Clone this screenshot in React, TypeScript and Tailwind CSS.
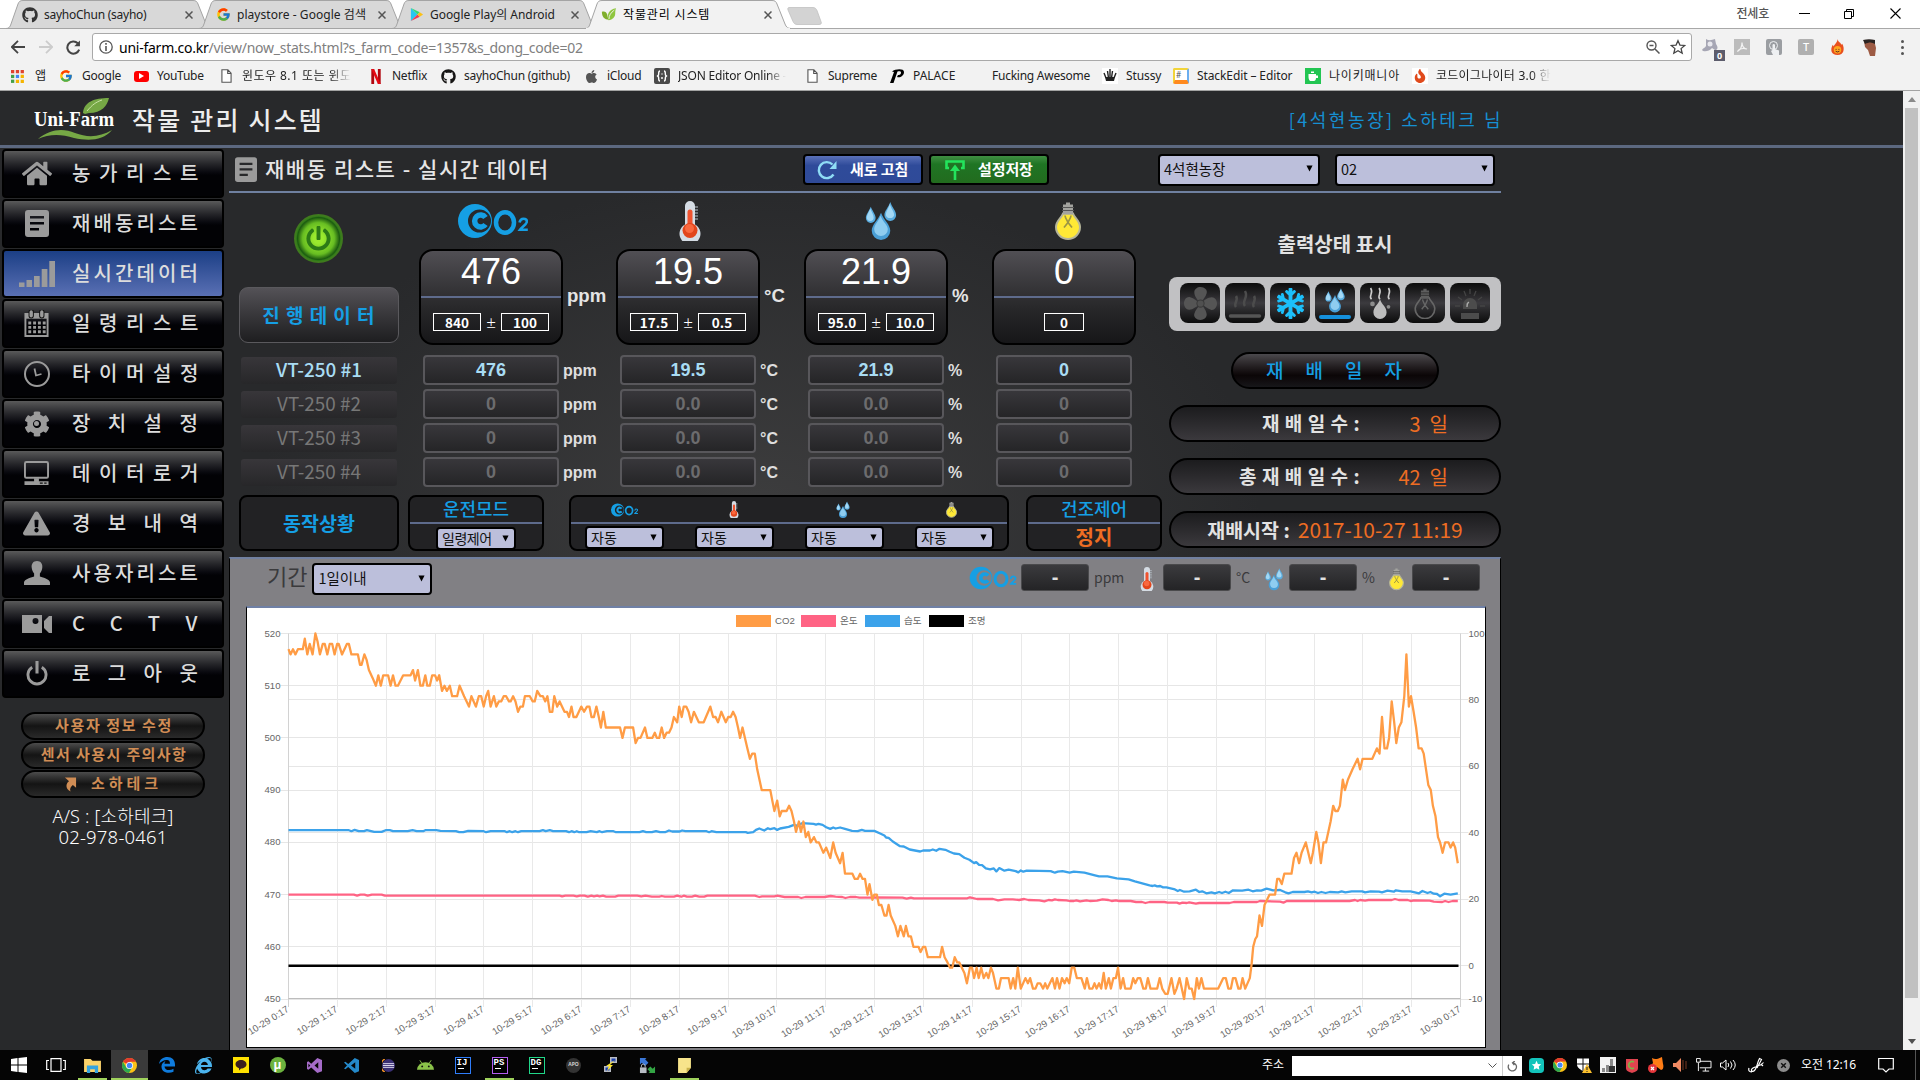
import type { ReactNode } from "react";
import { FaGithub, FaApple, FaInternetExplorer, FaHome, FaPowerOff, FaCog, FaExclamationTriangle, FaSnowflake, FaFire } from "react-icons/fa";
import { FcGoogle } from "react-icons/fc";

/* ---------- shared drawings ---------- */

function Co2({ className }: { className: string }) {
  return (
    <svg viewBox="0 0 70 36" className={className}>
      <path fillRule="evenodd" d="M17 1a17 17 0 1 0 0 34 17 17 0 1 0 0-34ZM21.500 6.500a11.500 11.500 0 1 1 0 23 11.500 11.500 0 1 1 0-23Z" fill="#159fe4" />
      <path d="M27.500 14.500a6 6 0 1 0 0 7" fill="none" stroke="#159fe4" strokeWidth="5.500" />
      <path d="M30 16h6v4h-6Z" fill="none" />
      <ellipse cx="47" cy="19.500" rx="9" ry="10.300" fill="none" stroke="#159fe4" strokeWidth="4.500" />
      <path d="M61.500 19.500c.6-2.800 2-3.800 4-3.800 2.200 0 3.600 1.200 3.300 3.300-.3 2.600-4.800 5-6.800 7.800h7.800" fill="none" stroke="#159fe4" strokeWidth="2.600" />
    </svg>
  );
}

function Thermo({ className }: { className: string }) {
  return (
    <svg viewBox="0 0 22 40" className={className}>
      <path d="M6 5a5 5 0 0 1 10 0v18.500a10.500 10.500 0 1 1-10 0Z" fill="#d5dce4" />
      <path d="M16 6h3M16 9h3M16 12h3M16 15h3M16 18h3" stroke="#b9c3cd" strokeWidth="1.200" />
      <path d="M8.500 11a2.500 2.500 0 0 1 5 0v13h-5Z" fill="#f0532f" />
      <circle cx="11" cy="29.500" r="7.500" fill="#e2451b" />
      <circle cx="10.500" cy="27.500" r="4.500" fill="#f9683f" />
    </svg>
  );
}

function Drops({ className }: { className: string }) {
  return (
    <svg viewBox="0 0 32 40" className={className}>
      <path d="M5.500 6c2 5 5 8 5 11.500a5 5 0 0 1-10 0C.5 14 3.500 11 5.500 6Z" fill="#5aade0" />
      <path d="M5 8c1.500 4 3.500 6 3.500 9a3.500 3.500 0 0 1-7 0C1.500 14 3.500 12 5 8Z" fill="#a3d8f5" />
      <path d="M25.500 1c2 6 6 9 6 13.500a6 6 0 0 1-12 0C19.500 10 23.500 7 25.500 1Z" fill="#5aade0" />
      <path d="M25 3c1.500 5 4.500 7.500 4.500 11.500a4.500 4.500 0 0 1-8.500 0C21 10.500 23.500 8 25 3Z" fill="#a3d8f5" />
      <path d="M16 12c3 8 9.500 12 9.500 18.500a9.500 9.500 0 0 1-19 0C6.500 24 13 20 16 12Z" fill="#4a9fd6" />
      <path d="M15.500 15c2.500 7 7.500 9 7.500 14a7 7 0 0 1-14 0C9 24 13 22 15.500 15Z" fill="#8fcdf0" />
    </svg>
  );
}

function Bulb({ className, off }: { className: string; off?: boolean }) {
  return (
    <svg viewBox="0 0 26 38" className={className}>
      <path d="M8 12h10c1 4 7 7 7 13.500A12 12 0 0 1 1 25.500C1 19 7 16 8 12Z" fill={off ? "none" : "#ffe936"} stroke={off ? "#666" : "#b4b49a"} strokeWidth="2" />
      <path d="M11 1h4v2h3v10H8V3h3Z" fill={off ? "#5e5e5e" : "#a3a39f"} />
      <path d="M7 6h12M7 9h12" stroke={off ? "#2a2a2a" : "#555"} strokeWidth="1" />
      <path d="M10 14c.5 4 3 5 3 8M16 14c-.5 4-3 5-3 8M13 21l-4 5M13 21l4 5" fill="none" stroke={off ? "#666" : "#9c9645"} strokeWidth="1.700" />
    </svg>
  );
}

function ChromeLogo({ className }: { className: string }) {
  return (
    <svg viewBox="0 0 24 24" className={className}>
      <circle cx="12" cy="12" r="12" fill="#fbc116" />
      <path d="M12 12 1.600 6A12 12 0 0 1 22.400 6H12Z" fill="#e33b2e" />
      <path d="M1.600 6a12 12 0 0 0 9.500 18l5.500-9.500L12 12 6.800 15Z" fill="#2da94f" />
      <circle cx="12" cy="12" r="5.600" fill="#fff" />
      <circle cx="12" cy="12" r="4.400" fill="#4688f4" />
    </svg>
  );
}

function Select({ children, className }: { children: ReactNode; className: string }) {
  return (
    <div className={"flex items-center justify-between rounded-[4px] border-2 border-black bg-[#bcbfdb] pl-1 text-[#111] " + className}>
      <span>{children}</span>
      <svg viewBox="0 0 8 8" className="mr-[5px] h-[7px] w-[7px] shrink-0">
        <path d="M0.500 0.500h7L4 7.500Z" fill="#000" />
      </svg>
    </div>
  );
}

/* ---------- browser frame ---------- */

function TabShape({ active }: { active?: boolean }) {
  return (
    <svg viewBox="0 0 210 29" className="absolute -left-[3px] top-0 h-[29px] w-[210px]">
      <path d="M0 28.500C3 28.500 4 27 5 24L12 4C13 1.500 14 .5 17 .5h170c3 0 4 1 5 3.500l8 20c1 3 3 4.500 6 4.500Z" fill={active ? "#f2f2f2" : "#d8d8d8"} stroke="#a4a4a4" />
      {active && <path d="M1 28.500h204" stroke="#f2f2f2" strokeWidth="1.500" />}
    </svg>
  );
}

function Tab({ icon, children, active }: { icon: ReactNode; children: ReactNode; active?: boolean }) {
  return (
    <div className="relative h-[29px] w-[193px]">
      <TabShape active={active} />
      <div className="relative flex h-[29px] items-center pl-[13px]">
        <span className="flex w-4 justify-center">{icon}</span>
        <span className="ml-[6px] w-[131px] whitespace-nowrap">{children}</span>
        <svg viewBox="0 0 8 8" className="ml-[10px] h-2 w-2">
          <path d="M.5.5l7 7M7.500.5l-7 7" stroke="#555" strokeWidth="1.500" />
        </svg>
      </div>
    </div>
  );
}

function Leaf() {
  return (
    <svg viewBox="0 0 18 16" className="h-[15px] w-[17px]">
      <path d="M1 5c3-1 5 0 6 3 0 2 1 4 2 6C4 14 1 11 1 5Z" fill="#7fae2b" />
      <path d="M8.500 14.500C6 8 9 2 17 1c-1 2-1 4-1 6 0 4-3 7-7.500 7.500Z" fill="#8fc63f" />
      <path d="M9 13C9 9 11 6 15 3" stroke="#f2f2f2" strokeWidth="1" fill="none" />
    </svg>
  );
}

function PlayLogo() {
  return (
    <svg viewBox="0 0 16 16" className="h-[15px] w-[15px]">
      <path d="M2 1v14l7-7Z" fill="#28c6f0" />
      <path d="M2 1l7 7 2.500-2.500Z" fill="#30d97a" />
      <path d="M2 15l7-7 2.500 2.500Z" fill="#f23b50" />
      <path d="M11.500 5.500 9 8l2.500 2.500L15 8Z" fill="#fbc116" />
    </svg>
  );
}

function FileIcon() {
  return (
    <svg viewBox="0 0 12 15" className="h-[14px] w-[11px]">
      <path d="M1 .7h6.500L11 4.500v9.800H1ZM7.300 1v3.800H11" fill="#fff" stroke="#555" strokeWidth="1.200" />
    </svg>
  );
}

const FADE = " [mask-image:linear-gradient(to_right,#000_82%,transparent_100%)]";

const BOOKMARKS: { w: string; icon: ReactNode; label: string; text?: string }[] = [
  {
    w: "w-[49px]",
    label: "앱",
    text: "pl-[2px]",
    icon: (
      <svg viewBox="0 0 14 14" className="h-[13px] w-[13px]">
        <path d="M0 0h3.500v3.500H0zM5.200 0h3.500v3.500H5.200zM10.400 0h3.500v3.500h-3.500z" fill="#e0432f" />
        <path d="M0 5.200h3.500v3.500H0z" fill="#43a047" />
        <path d="M5.200 5.200h3.500v3.500H5.200z" fill="#4285f4" />
        <path d="M10.400 5.200h3.500v3.500h-3.500zM5.200 10.400h3.500v3.500H5.200zM10.400 10.400h3.500v3.500h-3.500z" fill="#f5b400" />
        <path d="M0 10.400h3.500v3.500H0z" fill="#43a047" />
      </svg>
    ),
  },
  { w: "w-[75px]", label: "Google", icon: <FcGoogle className="h-[14px] w-[14px]" /> },
  {
    w: "w-[85px]",
    label: "YouTube",
    icon: (
      <span className="flex h-[11px] w-[15px] items-center justify-center rounded-[3px] bg-[#f00]">
        <svg viewBox="0 0 6 6" className="h-[6px] w-[6px]"><path d="M1 0l5 3-5 3Z" fill="#fff" /></svg>
      </span>
    ),
  },
  { w: "w-[150px]", label: "윈도우 8.1 또는 윈도", text: "tracking-[0.450px]" + FADE, icon: <FileIcon /> },
  {
    w: "w-[72px]",
    label: "Netflix",
    icon: (
      <svg viewBox="0 0 10 16" className="h-[15px] w-[10px]">
        <path d="M0 0h3v16H0zM7 0h3v16H7z" fill="#b1060f" />
        <path d="M0 0h3l7 16H7Z" fill="#e50914" />
      </svg>
    ),
  },
  { w: "w-[143px]", label: "sayhoChun (github)", text: "tracking-[-0.250px]", icon: <FaGithub className="h-[15px] w-[15px] text-[#161514]" /> },
  { w: "w-[71px]", label: "iCloud", icon: <FaApple className="h-[15px] w-[15px] text-[#555]" /> },
  {
    w: "w-[150px]",
    label: "JSON Editor Online -",
    text: "tracking-[-0.200px]" + FADE,
    icon: (
      <span className="flex h-4 w-4 items-center justify-center rounded-[2px] bg-[#4a4a4a]">
        <svg viewBox="0 0 12 12" className="h-[12px] w-[12px]">
          <path d="M4 1C2 1 3 4 2.500 5L1.500 6l1 1C3 8 2 11 4 11M8 1c2 0 1 3 1.500 4l1 1-1 1C9 8 10 11 8 11M6 3.500v1M6 7v2" fill="none" stroke="#fff" strokeWidth="1.400" />
        </svg>
      </span>
    ),
  },
  { w: "w-[85px]", label: "Supreme", icon: <FileIcon /> },
  {
    w: "w-[79px]",
    label: "PALACE",
    text: "tracking-[0px]",
    icon: (
      <svg viewBox="0 0 16 16" className="h-4 w-4">
        <path d="M1 15 5 4 3 3.500C6 1 15 0 15 4s-4 6-7 5l1-2c2 .5 3-1 3-2.500S10 3 8.500 3.500L4.500 15Z" fill="#000" />
      </svg>
    ),
  },
  { w: "w-[134px]", label: "Fucking Awesome", icon: null },
  {
    w: "w-[71px]",
    label: "Stussy",
    text: "tracking-[-0.100px]",
    icon: (
      <svg viewBox="0 0 16 16" className="h-4 w-4 bg-white">
        <path d="M2 5l2 5M5.500 3l1 7M10.500 3l-1 7M14 5l-2 5M8 1v9" stroke="#222" strokeWidth="1.400" />
        <path d="M3 9h10l-1 4H4Z" fill="#222" />
      </svg>
    ),
  },
  {
    w: "w-[132px]",
    label: "StackEdit – Editor",
    text: "tracking-[-0.100px]",
    icon: (
      <span className="flex h-4 w-4 items-start rounded-[2px] border-2 border-b-4 border-[#f2d43a] border-r-[#6aaef0] border-b-[#ff8a1f] bg-white pl-px text-[8px] leading-[9px] text-[#555]">#</span>
    ),
  },
  {
    w: "w-[107px]",
    label: "나이키매니아",
    text: "tracking-[0.800px]",
    icon: (
      <svg viewBox="0 0 16 16" className="h-4 w-4">
        <path d="M0 0h16v16H0z" fill="#22c552" />
        <path d="M3.500 6h7.500v1.500h2V10h-2c0 2-1 3-2 3H5.500c-1 0-2-2-2-4Z" fill="#fff" />
        <path d="M6 3.500h3v1.500H6z" fill="#fff" />
      </svg>
    ),
  },
  { w: "w-[142px]", label: "코드이그나이터 3.0 한", text: "tracking-[0.250px]" + FADE, icon: <span className="flex h-4 w-4 items-center justify-center bg-white"><FaFire className="h-[14px] w-[12px] text-[#e04a1c]" /></span> },
];

function Browser() {
  return (
    <div className="flex h-[91px] w-full flex-col border-b border-[#a3a3a3] bg-[#f2f2f2] font-['Noto_Sans','Noto_Sans_CJK_KR',sans-serif] text-[12px] text-[#222]">
      <div className="relative flex h-[29px] shrink-0 bg-white pl-[9px]">
        <div className="absolute inset-x-0 bottom-0 h-px bg-[#a8a8a8]" />
        <Tab icon={<FaGithub className="h-4 w-4 text-[#333]" />}>
          <span className="tracking-[-0.250px]">sayhoChun (sayho)</span>
        </Tab>
        <Tab icon={<FcGoogle className="h-[15px] w-[15px]" />}>
          <span className="tracking-[0.050px]">playstore - Google 검색</span>
        </Tab>
        <Tab icon={<PlayLogo />}>
          <span className="tracking-[-0.050px]">Google Play의 Android</span>
        </Tab>
        <Tab active icon={<Leaf />}>
          <span className="tracking-[0.850px] text-black">작물관리 시스템</span>
        </Tab>
        <svg viewBox="0 0 36 18" className="relative ml-[6px] mt-[7px] h-[18px] w-[36px]">
          <path d="M2 .5h24c2 0 3 1 4 3l4 11c1 2 0 3-2 3H10c-2 0-3-1-4-3L1 3C.5 1.500 1 .5 2 .5Z" fill="#d3d3d3" stroke="#bbb" strokeWidth=".7" />
        </svg>
        <div className="ml-auto flex h-[27px] items-center text-black">
          <span className="mr-[30px] text-[12px] font-medium tracking-[-0.200px] text-[#555]">전세호</span>
          <span className="mr-[34px] h-px w-[11px] bg-black" />
          <svg viewBox="0 0 10 10" className="mr-[36px] h-[10px] w-[10px]">
            <path d="M.5 2.500h7v7h-7ZM2.500 2.500v-2h7v7h-2" fill="none" stroke="#000" />
          </svg>
          <svg viewBox="0 0 11 11" className="mr-[19px] h-[11px] w-[11px]">
            <path d="M.5.5l10 10M10.500.5l-10 10" stroke="#000" strokeWidth="1.100" />
          </svg>
        </div>
      </div>

      <div className="flex h-[34px] shrink-0 items-center pt-[2px]">
        <svg viewBox="0 0 14 14" className="ml-[11px] h-[14px] w-[14px]">
          <path d="M7 .8.8 7 7 13.200M1 7h13" fill="none" stroke="#444" strokeWidth="1.800" />
        </svg>
        <svg viewBox="0 0 14 14" className="ml-[14px] h-[14px] w-[14px]">
          <path d="m7 .8 6.200 6.200L7 13.200M13 7H0" fill="none" stroke="#ccc" strokeWidth="1.800" />
        </svg>
        <svg viewBox="0 0 14 14" className="ml-[13px] h-[15px] w-[15px]">
          <path d="M12.300 9A5.700 5.700 0 1 1 11 3" fill="none" stroke="#444" strokeWidth="1.900" />
          <path d="M13 .5v5.300H7.700Z" fill="#444" />
        </svg>
        <div className="ml-[11px] flex h-[28px] w-[1600px] items-center rounded-[3px] border border-[#a9a9a9] bg-white">
          <svg viewBox="0 0 14 14" className="ml-[6px] h-[14px] w-[14px]">
            <circle cx="7" cy="7" r="6.200" fill="none" stroke="#555" strokeWidth="1.300" />
            <path d="M7 3v1.800M7 6v5" stroke="#555" strokeWidth="1.600" />
          </svg>
          <span className="ml-[6px] text-[14px] tracking-[-0.250px] text-[#808080]">
            <span className="text-black">uni-farm.co.kr</span>/view/now_stats.html?s_farm_code=1357&amp;s_dong_code=02
          </span>
          <svg viewBox="0 0 14 14" className="ml-auto mr-[10px] h-[14px] w-[14px]">
            <circle cx="5.500" cy="5.500" r="4.500" fill="none" stroke="#555" strokeWidth="1.400" />
            <path d="M3.500 5.500h4M9 9l4.500 4.500" stroke="#555" strokeWidth="1.500" />
          </svg>
          <svg viewBox="0 0 24 24" className="mr-[5px] h-[16px] w-[16px]">
            <path d="m12 2.500 2.900 6.600 7.100.6-5.400 4.700 1.700 7L12 17.700 5.700 21.400l1.700-7L2 9.700l7.100-.6Z" fill="none" stroke="#444" strokeWidth="1.900" />
          </svg>
        </div>
        <div className="relative ml-[9px] h-[18px] w-[19px]">
          <svg viewBox="0 0 18 16" className="h-[16px] w-[18px]">
            <path d="M5 1c3 2 6 1 9 0l1 5c3 4 1 6-1 6l-3-2c-3 4-9 4-10 2 1-2 3-2 4-4Z" fill="#a6a6b4" />
            <circle cx="9" cy="6" r="2.500" fill="#e8e8ee" />
          </svg>
          <span className="absolute -bottom-[5px] right-[-5px] flex h-[11px] w-[11px] items-center justify-center bg-[#5c5c6c] text-[9px] font-bold text-white">0</span>
        </div>
        <span className="ml-[14px] flex h-[16px] w-[16px] items-center justify-center bg-[#bcbcbc]">
          <svg viewBox="0 0 12 12" className="h-3 w-3"><path d="M1.500 10.500C4 9 6 5 6 1.500 6 5 8 8 11 8 7 7 3 8 1.500 10.500Z" fill="none" stroke="#f4f4f4" strokeWidth="1.200" /></svg>
        </span>
        <span className="ml-[16px] flex h-[16px] w-[16px] items-end justify-center rounded-[2px] bg-[#9b9ea2]">
          <svg viewBox="0 0 12 14" className="h-[14px] w-3">
            <circle cx="5.500" cy="4.500" r="4" fill="none" stroke="#eef0f2" />
            <path d="M5 14 3 10l1.500-1V4a1.300 1.300 0 0 1 2.500 0v4l4 1.500V14Z" fill="#eef0f2" />
          </svg>
        </span>
        <span className="ml-[16px] flex h-[16px] w-[16px] items-center justify-center rounded-[2px] bg-[#b0b0b0] text-[11px] font-medium text-white">T</span>
        <svg viewBox="0 0 16 18" className="ml-[16px] h-[17px] w-[15px]">
          <path d="M8 0c1 4 3 3 4 6l1-1c3 5 2 12-5 12S0 11 3 6l1 2c1-3 4-4 4-8Z" fill="#e9501e" />
          <circle cx="8" cy="11.500" r="4" fill="#ffa51e" />
          <path d="M6.500 10.500v1M9.500 10.500v1M6 13q2 1.500 4 0" stroke="#522" fill="none" />
        </svg>
        <svg viewBox="0 0 16 17" className="ml-[17px] h-[17px] w-[16px]">
          <path d="M2 2 12 1l2 8-1 8H8L6 11 3 8Z" fill="#9d5b44" />
          <path d="M1 1c4-1 8-1 12 0v4c-3-2-6-2-10 0Z" fill="#2b2422" />
        </svg>
        <div className="ml-[23px] flex flex-col gap-[3px]">
          <span className="h-[3px] w-[3px] rounded-full bg-[#555]" />
          <span className="h-[3px] w-[3px] rounded-full bg-[#555]" />
          <span className="h-[3px] w-[3px] rounded-full bg-[#555]" />
        </div>
      </div>

      <div className="flex h-[26px] items-center pl-[9px]">
        {BOOKMARKS.map((b) => (
          <div key={b.label} className={"flex shrink-0 items-center " + b.w}>
            <span className="flex h-4 w-4 shrink-0 items-center justify-center">{b.icon}</span>
            <span className={"ml-2 whitespace-nowrap leading-[18px] " + (b.text ?? "tracking-[-0.250px]")}>{b.label}</span>
          </div>
        ))}
      </div>
    </div>
  );
}

/* ---------- side menu ---------- */

function ListIcon({ className }: { className: string }) {
  return (
    <svg viewBox="0 0 24 27" className={className}>
      <path fillRule="evenodd" d="M3 0h18a3 3 0 0 1 3 3v21a3 3 0 0 1-3 3H3a3 3 0 0 1-3-3V3a3 3 0 0 1 3-3ZM5 6v2.500h14V6ZM5 12v2.500h14V12ZM5 18v2.500h9V18Z" fill="currentColor" />
    </svg>
  );
}

const MENU: { label: string; sp: string; icon: ReactNode; active?: boolean }[] = [
  { label: "농가리스트", sp: "tracking-[8.600px]", icon: <FaHome className="h-[29px] w-[30px]" /> },
  { label: "재배동리스트", sp: "tracking-[3.100px]", icon: <ListIcon className="h-[27px] w-[24px]" /> },
  {
    label: "실시간데이터",
    sp: "tracking-[3.100px]",
    active: true,
    icon: (
      <svg viewBox="0 0 36 26" className="h-[26px] w-[36px]">
        <path d="M0 21.500h5.500V26H0zM7.500 19H13v7H7.500zM15 15h5.700v11H15zM22.700 8h5.700v18h-5.700zM30.300 0H36v26h-5.700z" fill="currentColor" />
      </svg>
    ),
  },
  {
    label: "일령리스트",
    sp: "tracking-[8.600px]",
    icon: (
      <svg viewBox="0 0 25 28" className="h-[27px] w-[25px]">
        <path d="M1 4h23v23H1Z" fill="none" stroke="currentColor" strokeWidth="2" />
        <path d="M1 4h23v5H1Z" fill="currentColor" />
        <path d="M7 2v4M18 2v4" stroke="#111" strokeWidth="5.500" strokeLinecap="round" />
        <path d="M7 2v4M18 2v4" stroke="currentColor" strokeWidth="3.500" strokeLinecap="round" />
        <path d="M4 13.500h18M4 18h18M4 22.500h18" stroke="currentColor" strokeWidth="3" strokeDasharray="3 2" />
      </svg>
    ),
  },
  {
    label: "타이머설정",
    sp: "tracking-[8.600px]",
    icon: (
      <svg viewBox="0 0 26 26" className="h-[26px] w-[26px]">
        <circle cx="13" cy="13" r="12" fill="none" stroke="currentColor" strokeWidth="2" />
        <path d="M10.500 7.500 12 14.500l5.500-1.500" fill="none" stroke="currentColor" strokeWidth="1.800" />
      </svg>
    ),
  },
  {
    label: "장치설정",
    sp: "tracking-[17.400px]",
    icon: (
      <span className="relative flex h-[26px] w-[26px] items-center justify-center">
        <FaCog className="h-[26px] w-[26px]" />
        <span className="absolute h-[5px] w-[5px] rounded-full bg-current" />
      </span>
    ),
  },
  {
    label: "데이터로거",
    sp: "tracking-[8.600px]",
    icon: (
      <svg viewBox="0 0 27 26" className="h-[25px] w-[27px]">
        <rect x="1.500" y="1" width="24" height="16.500" rx="1.500" fill="none" stroke="currentColor" strokeWidth="2" />
        <path d="M11 18h5v3h-5zM1 21h25v4H1z" fill="currentColor" />
        <path d="M17 23h7" stroke="#111" strokeWidth="1.200" strokeDasharray="3 1.500" />
      </svg>
    ),
  },
  { label: "경보내역", sp: "tracking-[17.400px]", icon: <FaExclamationTriangle className="h-[25px] w-[27px]" /> },
  {
    label: "사용자리스트",
    sp: "tracking-[3.100px]",
    icon: (
      <svg viewBox="0 0 27 26" className="h-[25px] w-[26px]">
        <path d="M13.500 0c4 0 6 3 5.500 7-.4 3-1.500 5-2.500 6v3c4 1 10 3 10.500 6v3H0v-3c.5-3 6.500-5 10.500-6v-3C9.500 12 8.400 10 8 7c-.5-4 1.500-7 5.500-7Z" fill="currentColor" />
      </svg>
    ),
  },
  {
    label: "CCTV",
    sp: "tracking-[25.500px]",
    icon: (
      <svg viewBox="0 0 30 18" className="h-[18px] w-[30px]">
        <path fillRule="evenodd" d="M0 0h20v18H0ZM13.500 3a3 3 0 1 0 0 6 3 3 0 0 0 0-6ZM22 6l5-5h3v17h-3l-5-5Z" fill="currentColor" />
      </svg>
    ),
  },
  {
    label: "로그아웃",
    sp: "tracking-[17.400px]",
    icon: (
      <svg viewBox="0 0 22 26" className="h-[25px] w-[22px]">
        <path d="M6 6.500a9.400 9.400 0 1 0 10 0" fill="none" stroke="currentColor" strokeWidth="3" />
        <path d="M11 0v13" stroke="currentColor" strokeWidth="3.200" />
      </svg>
    ),
  },
];

function SidePill({ children }: { children: ReactNode }) {
  return (
    <div className="flex h-[28px] w-[184px] items-center justify-center rounded-full border-2 border-black bg-linear-to-b from-[#4c4c4c] via-[#141414] via-50% to-[#2a2a2a] pb-px text-[15px] font-bold text-[#d08d55] whitespace-nowrap">
      {children}
    </div>
  );
}

function Sidebar() {
  return (
    <div className="flex w-[229px] shrink-0 flex-col pl-[2px] pt-[1px] text-[#c2c2c2]">
      {MENU.map((m) => (
        <div
          key={m.label}
          className={
            "mb-px flex h-[49px] w-[222px] items-center rounded-[4px] border-2 border-black " +
            (m.active ? "bg-linear-to-b from-[#1b3f86] to-[#5a70b4]" : "bg-linear-to-b from-[#5a5a5a] via-[#020205] via-55% to-[#020205]")
          }
        >
          <span className="flex w-[65px] shrink-0 items-center justify-center text-[#9b9b9b]">{m.icon}</span>
          <span className={"pl-[3px] pb-px text-[20px] font-medium leading-[30px] text-[#dcdcdc] whitespace-nowrap " + m.sp}>{m.label}</span>
        </div>
      ))}
      <div className="mt-[13px] ml-[19px] flex flex-col gap-px">
        <SidePill><span className="pl-[2px] tracking-[1.600px]">사용자 정보 수정</span></SidePill>
        <SidePill><span className="pl-[2px] tracking-[1.400px]">센서 사용시 주의사항</span></SidePill>
        <SidePill>
          <svg viewBox="0 0 14 16" className="mr-[14px] h-[16px] w-[13px]">
            <path d="M1 1h12v11L9.500 9C7 11 6 13 7 16 1 13 2 7 5.500 5Z" fill="#d08d55" />
          </svg>
          <span className="tracking-[4px]">소하테크</span>
        </SidePill>
      </div>
      <div className="mt-[8px] w-[222px] text-center font-['Noto_Sans','Noto_Sans_CJK_KR',sans-serif] font-light leading-[20px] text-white">
        <div className="text-[18px] tracking-[0.200px]">A/S : [소하테크]</div>
        <div className="pt-px text-[18.500px] tracking-[0.200px]">02-978-0461</div>
      </div>
    </div>
  );
}

/* ---------- status panel ---------- */

const BOX = "flex h-[56px] flex-col rounded-[8px] border-2 border-black bg-[#222224]";

function BigCard({ value, a, b, unit, icon }: { value: string; a: string; b?: string; unit?: string; icon: ReactNode }) {
  return (
    <div>
      <div className="flex h-[56px] w-[144px] items-start justify-center pt-[8px]">{icon}</div>
      <div className="flex">
        <div className="flex h-[96px] w-[144px] flex-col rounded-[14px] border-2 border-black bg-linear-to-b from-[#514f54] via-[#29292b] via-60% to-[#161618]">
          <div className="flex h-[47px] items-center justify-center border-b-2 border-[#5e6b8c] pb-[3px] font-['Liberation_Sans',sans-serif] text-[36px] leading-[44px] text-white">{value}</div>
          <div className="flex items-center justify-center gap-[5px] pt-[15px] text-[13.500px] font-bold leading-[16px] text-white">
            <span className={"flex h-[18px] items-center justify-center border border-white " + (b ? "w-[48px]" : "w-[40px]")}>{a}</span>
            {b && (
              <>
                <span className="w-[10px] text-center font-['Noto_Sans',sans-serif] text-[17px] font-light">±</span>
                <span className="flex h-[18px] w-[48px] items-center justify-center border border-white">{b}</span>
              </>
            )}
          </div>
        </div>
        <div className="pl-[4px] pt-[36px] font-['Liberation_Sans',sans-serif] text-[18.600px] font-bold leading-[22px] text-[#e4e4e4]">{unit}</div>
      </div>
    </div>
  );
}

const ROWS = [
  { name: "VT-250 #1", v: ["476", "19.5", "21.9", "0"], on: true },
  { name: "VT-250 #2", v: ["0", "0.0", "0.0", "0"], on: false },
  { name: "VT-250 #3", v: ["0", "0.0", "0.0", "0"], on: false },
  { name: "VT-250 #4", v: ["0", "0.0", "0.0", "0"], on: false },
];
const UNITS = ["ppm", "°C", "%", ""];

function StatusPanel() {
  return (
    <div className="w-[940px] shrink-0">
      <div className="grid h-[162px] grid-cols-[190px_197px_188px_188px_170px]">
        <div className="flex flex-col items-center pr-[10px] pt-[21px]">
          <div className="mr-[2px] flex h-[49px] w-[49px] items-center justify-center rounded-full border-2 border-[#3f7a1e] bg-[radial-gradient(circle,#9aea2e_15%,#67bd22_50%,#1c5a10_66%,#2f8018_70%)]">
            <FaPowerOff className="h-[25px] w-[25px] text-[#2c7a16]" />
          </div>
          <div className="mt-[24px] flex h-[56px] w-[160px] items-center justify-center rounded-[9px] border border-[#5a595d] bg-linear-to-b from-[#545257] to-[#1e1e20] text-[19px] font-bold tracking-[6.200px] text-[#159fe4]">
            <span className="pl-[5px]">진행데이터</span>
          </div>
        </div>
        <BigCard value="476" a="840" b="100" unit="ppm" icon={<Co2 className="ml-[3px] mt-[2px] h-[36px] w-[70px]" />} />
        <BigCard value="19.5" a="17.5" b="0.5" unit="°C" icon={<Thermo className="ml-[3px] h-[40px] w-[22px]" />} />
        <BigCard value="21.9" a="95.0" b="10.0" unit="%" icon={<Drops className="ml-[10px] h-[39px] w-[32px]" />} />
        <BigCard value="0" a="0" icon={<Bulb className="ml-[7px] h-[39px] w-[26px]" />} />
      </div>

      {ROWS.map((r) => (
        <div key={r.name} className="grid h-[34px] grid-cols-[194px_197px_188px_188px_160px]">
          <div className={"ml-[12px] mt-[2px] flex h-[27px] w-[156px] items-center justify-center rounded-[3px] bg-linear-to-b from-[#38363a] to-[#272729] pb-[2px] text-[18.900px] " + (r.on ? "font-medium text-[#a9dcf3]" : "text-[#777]")}>
            {r.name}
          </div>
          {r.v.map((v, i) => (
            <div key={i} className="flex font-['Liberation_Sans',sans-serif] font-bold">
              <div className={"flex h-[30px] w-[136px] items-center justify-center rounded-[4px] border-2 border-[#58575b] bg-linear-to-b from-[#38373b] to-[#252527] text-[18px] " + (r.on ? "text-[#a9dcf3]" : "text-[#6c6c6e]")}>
                {v}
              </div>
              <span className="pl-[4px] text-[16px] leading-[31px] text-[#dedede]">{UNITS[i]}</span>
            </div>
          ))}
        </div>
      ))}

      <div className="flex pl-[10px] pt-[4px] text-[18px] font-medium text-[#159fe4]">
        <div className={BOX + " w-[160px] items-center justify-center text-[19.500px] font-bold"}>동작상황</div>
        <div className={BOX + " ml-[9px] w-[136px] items-center"}>
          <div className="h-[27px] w-full shrink-0 border-b-2 border-[#5e6b8c] text-center leading-[22px]">운전모드</div>
          <Select className="mt-[3px] h-[23px] w-[80px] shrink-0 text-[14px] font-normal tracking-[-0.500px]">일령제어</Select>
        </div>
        <div className={BOX + " ml-[25px] w-[440px]"}>
          <div className="flex h-[27px] shrink-0 items-center border-b-2 border-[#5e6b8c] pl-px">
            <span className="flex w-[106px] justify-center"><Co2 className="h-[14px] w-[27px]" /></span>
            <span className="flex w-[114px] justify-center"><Thermo className="h-[17px] w-[10px]" /></span>
            <span className="flex w-[106px] justify-center"><Drops className="h-[17px] w-[14px]" /></span>
            <span className="flex w-[112px] justify-center"><Bulb className="h-[17px] w-[11px]" /></span>
          </div>
          <div className="flex gap-[31px] pl-[14px] pt-[2px] text-[14px] font-normal">
            {[0, 1, 2, 3].map((i) => (
              <Select key={i} className="h-[23px] w-[79px]">자동</Select>
            ))}
          </div>
        </div>
        <div className={BOX + " ml-[17px] w-[136px] text-center"}>
          <div className="h-[27px] shrink-0 border-b-2 border-[#5e6b8c] leading-[22px]">건조제어</div>
          <div className="text-[20px] font-bold leading-[26px] text-[#ee6d23]">정지</div>
        </div>
      </div>
    </div>
  );
}

function OutIcon({ children }: { children: ReactNode }) {
  return <div className="flex h-[40px] w-[40px] items-center justify-center rounded-[8px] bg-linear-to-b from-[#0c0c0c] via-[#3c3b3f] to-[#0c0c0c]">{children}</div>;
}

const PILL = "flex h-[37px] w-[332px] items-center rounded-full border-2 border-black bg-linear-to-b from-[#1c1c1e] to-[#3b393d]";
const BLADE = "M15 15C13 12 10 9 10 5c0-3 3-5 6-5 4 0 7 3 6 6-1 4-4 6-5 9Z";

function OutputPanel() {
  return (
    <div className="flex w-[332px] flex-col items-center text-[19px] font-bold text-[#e2e2e2]">
      <div className="mt-[35px] text-[20px] leading-[32px]">출력상태 표시</div>
      <div className="mt-[17px] flex h-[54px] w-[332px] gap-[5px] rounded-[8px] bg-[#c1c1c3] pl-[11px] pt-[6px]">
        <OutIcon>
          <svg viewBox="0 0 32 32" className="h-[33px] w-[33px]">
            <g fill="#555">
              <path d={BLADE} />
              <path d={BLADE} transform="rotate(90 16 16)" />
              <path d={BLADE} transform="rotate(180 16 16)" />
              <path d={BLADE} transform="rotate(270 16 16)" />
            </g>
            <circle cx="16" cy="16" r="3.500" fill="#505050" stroke="#3a3a3a" />
          </svg>
        </OutIcon>
        <OutIcon>
          <svg viewBox="0 0 34 34" className="h-[34px] w-[34px]">
            <path d="M8 21c-3-4 3-6 0-11M17 20c-4-5 4-8 0-15M26 21c-3-4 3-6 0-11" fill="none" stroke="#4c4c4c" strokeWidth="2.500" />
            <path d="M2.500 30h29" stroke="#555" strokeWidth="3.500" strokeLinecap="round" />
          </svg>
        </OutIcon>
        <OutIcon><FaSnowflake className="h-[31px] w-[31px] text-[#1cc0fb]" /></OutIcon>
        <OutIcon>
          <div className="flex flex-col items-center">
            <Drops className="h-[26px] w-[20px]" />
            <span className="mt-[2px] h-[4px] w-[32px] rounded-full bg-[#1590dc]" />
          </div>
        </OutIcon>
        <OutIcon>
          <svg viewBox="0 0 34 36" className="h-[34px] w-[32px]">
            <path d="M8 14c-4-4 3-6-1-12M17 14c-4-4 3-6-1-12M27 14c-4-4 3-6-1-12" fill="none" stroke="#ccc" strokeWidth="1.700" />
            <path d="M17 14c2 6 7 8 7 14a7 7 0 0 1-14 0c0-6 5-8 7-14Z" fill="#bdbdbd" />
            <circle cx="9" cy="19" r="2.500" fill="#8d8d8d" />
            <circle cx="26" cy="22" r="2" fill="#8d8d8d" />
          </svg>
        </OutIcon>
        <OutIcon><Bulb off className="h-[31px] w-[22px]" /></OutIcon>
        <OutIcon>
          <svg viewBox="0 0 34 34" className="h-[34px] w-[34px]">
            <path d="M10 23v-4a7 7 0 0 1 14 0v4ZM8 27h18v6H8Z" fill="#4c4c4c" />
            <path d="M2 20h5M5 11l4 3M11 5l2 5M17 3v5M23 5l-2 5M29 11l-4 3M32 20h-5" stroke="#444" strokeWidth="1.300" />
            <path d="M14 21c0-3 0-4 2-5" fill="none" stroke="#aaa" strokeWidth="1.300" />
          </svg>
        </OutIcon>
      </div>
      <div className="mt-[21px] flex h-[37px] w-[208px] items-center justify-center rounded-full border-2 border-black bg-linear-to-b from-[#4b494d] via-[#0b0607] via-65% to-[#17171a] tracking-[22px] text-[#159fe4]">
        <span className="pl-[20px] text-[19px] font-medium whitespace-pre">재배일자</span>
      </div>
      <div className={PILL + " mt-[16px]"}>
        <span className="w-[194px] text-right tracking-[5.400px] whitespace-pre">재배일수:</span>
        <span className="ml-auto mr-[51px] text-[20px] font-normal whitespace-pre text-[#ee6d23]">3  일</span>
      </div>
      <div className={PILL + " mt-[16px]"}>
        <span className="w-[194px] text-right tracking-[5.400px] whitespace-pre">총재배일수:</span>
        <span className="ml-auto mr-[51px] text-[20px] font-normal whitespace-pre text-[#ee6d23]">42  일</span>
      </div>
      <div className={PILL + " mt-[16px] justify-center"}>
        <span className="text-[19.500px]">재배시작 :</span>
        <span className="ml-[8px] text-[21px] font-normal text-[#ee6d23]">2017-10-27 11:19</span>
      </div>
    </div>
  );
}

/* ---------- chart ---------- */

type Pt = [number, number];

/* Horizontal units: 119.6 per hour from 0:17 (offset 120) in the first half, 116 per hour from 12:17 (offset 36.5) in the second. */
const CO2_AM: Pt[] = [[120,517],[125,516],[131,517],[137,516],[143,517],[155,517],[160,519],[166,516],[172,518],[179,516],[186,520],[191,518.5],[197,516],[204,518],[209,518],[215,516],[221,518],[227,518],[233,516],[239,518],[243,518],[251,516],[263,518],[268,518],[274,516],[290,516],[295,514],[299,514],[306,516],[311,515],[317,513],[326,511.5],[334,510],[340,512],[346,510],[352,512],[364,512],[370,510],[376,512],[382,510],[388,510],[401,512],[419,512],[425,513],[430,511],[437,513],[443,510],[449,510],[455,512],[460,510],[466,510],[472,512],[479,512],[484,511],[489,512],[496,509],[502,510],[508,509],[515,510],[521,508],[533,508],[539,510],[550,508],[562,506],[568,508],[579,506],[586,508],[592,508],[598,506],[604,508],[609,509],[615,506],[623,508],[629,506],[635,507],[641,507],[647,508],[653,508],[660,507],[664,507],[670,508],[676,507],[682,505],[688,506],[694,506],[699,508],[711,508],[718,507],[723,507],[729,509],[737,508],[743,508],[749,507],[754,508],[760,505],[766,505],[771,508],[778,506],[784,507],[796,505],[802,505],[807,504],[813,506],[818,504],[825,504],[837,506],[844,505],[851,506],[857,506],[862,504],[868,504],[874,506],[880,504],[885,502],[891,505],[897,502],[932,502],[938,500],[944,502],[964,502],[970,499],[976,500],[982,500],[993,502],[999,500],[1011,500],[1017,501],[1022,500],[1028,500],[1034,502],[1040,500],[1046,501],[1052,501],[1058,502],[1064,504],[1072,503],[1077,506],[1083,504],[1088,506],[1094,506],[1100,505],[1106,503],[1113,505],[1125,503],[1137,503],[1148,505],[1153,506],[1160,504],[1166,504],[1172,503],[1180,505],[1191,503],[1197,504],[1203,504],[1209,505],[1215,504],[1221,502],[1226,500],[1232,502],[1244,498],[1250,496],[1256,497],[1262,497],[1268,494],[1279,490],[1300,490],[1305,488],[1310,486],[1317,488],[1323,485],[1328,486],[1340,486],[1346,487],[1352,486],[1358,484],[1363,482],[1370,484],[1375,482],[1381,484],[1387,481],[1393,482],[1399,480],[1407,481],[1413,480],[1419,480],[1430,478],[1437,479],[1447,477],[1454,480],[1460,478],[1471,476],[1477,478],[1483,474],[1501,474],[1507,473],[1514,473],[1520,474],[1526,473],[1532,473],[1538,470],[1543,472],[1550,469]];
const CO2_PM: Pt[] = [[36,470],[42,470],[47,468],[53,468],[60,466],[65,466],[70,468],[75,466],[86,464],[92,462],[98,464],[106,462],[111,464],[117,462],[123,462],[129,460],[141,460],[146,459],[152,460],[157,460],[163,458],[192,458],[197,460],[203,458],[210,457],[216,456],[221,456],[227,458],[233,457],[238,457],[250,455],[256,453],[263,456],[268,456],[273,454],[279,456],[284,454],[290,456],[296,454],[302,455],[307,454],[313,456],[318,455],[326,452],[332,452],[337,454],[355,454],[360,452],[366,454],[371,452],[377,456],[384,452],[395,454],[401,453],[406,454],[413,452],[419,452],[424,453],[430,453],[437,452],[442,453],[447,452],[459,454],[465,452],[470,454],[476,452],[482,454],[488,453],[493,454],[499,453],[505,456],[511,456],[517,454],[528,454],[536,452],[541,454],[547,452],[554,452],[559,453],[564,452],[570,453],[575,452],[581,455],[586,452],[593,454],[598,452],[604,454],[610,454],[615,456],[621,452],[627,454],[632,452],[645,452],[651,454],[656,453],[662,454],[668,454],[675,452],[681,452],[686,454],[692,452],[708,452],[714,454],[720,452],[727,451],[733,451],[742,454],[749,451],[754,452],[761,454],[772,450],[778,454],[784,452],[790,452],[796,450],[802,454],[807,452],[813,454],[819,452],[853,452],[865,454],[871,454],[877,452],[883,452],[888,454],[894,454],[901,452],[906,452],[911,454],[917,452],[928,454],[932,456.5],[936,460],[941,461.5],[945,462],[951,466],[957,464],[963,468],[975,470],[988,470],[993,473],[998,473],[1004,472],[1010,474],[1027,474],[1033,477],[1039,478],[1045,476],[1051,478],[1061,480],[1067,478],[1073,476],[1078,478],[1086,482],[1091,480],[1097,476],[1103,480],[1109,480],[1120,484],[1126,487],[1131,486],[1137,486],[1142,487],[1149,492],[1154,490],[1161,492],[1172,494],[1184,496],[1190,494],[1196,496],[1219,496],[1230,498],[1236,497],[1242,504],[1248,498],[1254,498],[1259,500],[1265,507],[1271,503],[1276,499],[1282,502],[1288,503],[1295,508],[1300,516],[1306,506],[1311,508],[1317,505],[1323,502],[1329,498],[1336,498],[1341,497],[1352,491],[1358,490],[1363,487],[1369,485],[1375,481],[1380,480],[1386,478],[1392,480],[1400,480],[1405,479],[1411,480],[1416,479],[1422,476]];
const HUM_AM: Pt[] = [[120,40.8],[268,40.8],[274,40.5],[282,40.9],[292,40.5],[305,40.5],[312,40.8],[330,40.3],[348,40.3],[358,40.8],[368,40.8],[376,40.5],[412,40.5],[424,40.8],[434,40.5],[450,40.5],[455,40.8],[482,40.8],[492,40.6],[530,40.5],[538,40.2],[548,40.2],[560,40.6],[598,40.5],[604,40.2],[615,40.5],[650,40.5],[655,40.2],[662,40.5],[668,40.2],[676,40.5],[682,40.2],[690,40.5],[735,40.5],[743,40.8],[750,40.5],[760,40.8],[768,40.5],[800,40.5],[807,40.2],[813,40.5],[820,40.2],[826,40.5],[832,40.2],[850,40.2],[860,40.5],[875,40.2],[882,40.5],[888,40.2],[900,40.5],[916,40.5],[922,40.2],[980,40.2],[988,40.5],[996,40.2],[1010,40.2],[1020,40.5],[1030,40.2],[1042,40.2],[1052,40.7],[1060,40.4],[1078,40.4],[1084,40.7],[1092,40.5],[1144,40.5],[1150,40.2],[1156,40.5],[1168,40.2],[1240,40.2],[1245,40],[1258,40.2],[1265,40.9],[1273,41.3],[1285,40.7],[1294,41.4],[1300,41.1],[1310,41.4],[1317,40.9],[1324,41.3],[1345,41.8],[1358,42.4],[1364,42.1],[1378,42.9],[1406,42.7],[1412,42.5],[1418,42.7],[1428,42.4],[1437,41.7],[1447,41.2],[1454,41.6],[1460,41.3],[1471,41.6],[1483,41.2],[1500,40.6],[1514,40.5],[1524,40.9],[1532,40.6],[1550,40.6]];
const HUM_PM: Pt[] = [[36,40.6],[50,39.8],[60,39.2],[64,38.6],[70,38.5],[80,37.4],[97,36],[106,35.9],[120,35],[145,34.4],[152,34.7],[168,34.7],[175,35],[183,34.6],[191,35.2],[205,34.9],[215,34.3],[225,33.8],[238,33.6],[250,32.5],[262,31.9],[273,30.9],[278,31.2],[285,30.4],[292,30.3],[301,29.3],[311,29],[320,29.3],[326,28.4],[333,29.4],[345,28.6],[355,28.9],[372,28.5],[378,28.1],[384,28.7],[390,28.3],[398,28.6],[455,28.5],[465,28],[472,28.3],[483,28.5],[500,28],[510,28.3],[535,28],[560,27.2],[570,26.9],[590,26.9],[612,26.3],[640,26],[655,25.4],[690,24.2],[697,24],[702,24.2],[708,23.9],[715,24],[722,23.6],[730,23.6],[750,23],[757,22.5],[762,22.8],[772,22.3],[785,22.4],[800,22.9],[808,22.2],[815,22.4],[825,21.8],[837,22.1],[845,21.8],[855,22.2],[862,21.9],[870,22.3],[878,21.9],[888,22.7],[910,22.6],[925,22.9],[935,22.4],[945,22.7],[955,22.6],[968,23.2],[983,22.7],[1000,22.8],[1012,22.1],[1020,21.8],[1030,22.2],[1058,22.2],[1066,22.4],[1075,22.1],[1082,22.3],[1090,21.9],[1098,22.2],[1108,21.9],[1118,22.2],[1138,22.1],[1146,22.4],[1155,22.1],[1170,22.4],[1195,22.4],[1202,22.1],[1215,22.4],[1235,22.3],[1242,22.1],[1255,22.6],[1270,22.3],[1275,22.7],[1290,22.4],[1310,22.4],[1330,21.8],[1338,22.5],[1350,21.9],[1357,22.2],[1365,21.7],[1373,21.6],[1380,20.9],[1390,21.7],[1405,21.4],[1422,21.8]];
const TMP_AM: Pt[] = [[120,21.4],[280,21.4],[288,21.1],[296,21.4],[306,21.4],[314,21.1],[324,21.4],[348,21.4],[356,21.1],[784,21.1],[790,20.9],[798,21.1],[818,21.1],[826,20.9],[834,21.1],[845,21.1],[853,20.8],[862,21.1],[868,20.9],[876,21.1],[882,20.9],[890,21.1],[898,20.8],[920,20.8],[928,21.1],[974,21.1],[984,20.9],[994,21.1],[1010,20.8],[1028,20.8],[1034,21],[1042,20.8],[1064,20.8],[1072,21.1],[1082,20.8],[1088,21.1],[1096,20.8],[1108,20.8],[1116,21.1],[1126,20.8],[1138,20.8],[1146,21.1],[1262,21.1],[1273,20.7],[1280,20.9],[1310,20.9],[1317,21.1],[1335,20.7],[1368,20.7],[1376,20.4],[1386,20.7],[1432,20.7],[1448,21],[1460,20.8],[1476,20.7],[1484,20.4],[1495,20.7],[1510,20.7],[1518,20.5],[1550,20.5]];
const TMP_PM: Pt[] = [[36,20.6],[103,20.5],[113,20.2],[123,20.5],[130,20.3],[257,20.3],[263,20.6],[280,20.1],[318,20.1],[330,19.7],[345,20],[365,20],[380,19.8],[392,20.1],[402,19.8],[428,19.7],[440,19.4],[450,19.8],[458,19.7],[465,20],[472,19.8],[492,19.7],[500,19.5],[510,19.5],[516,19.7],[525,19.4],[540,19.7],[548,19.5],[565,19.6],[578,20],[592,19.8],[600,19.5],[610,19.7],[618,19.5],[645,19.5],[658,19.2],[672,19.2],[680,18.9],[690,19.2],[725,19.2],[733,19],[755,19],[761,18.7],[768,19],[778,18.9],[784,19.1],[800,18.7],[808,18.9],[880,18.9],[890,19.2],[945,19.2],[952,19.5],[1000,19.3],[1008,19],[1016,19.5],[1165,19.5],[1178,19.8],[1184,19.5],[1190,19.8],[1202,19.6],[1210,19.8],[1265,19.8],[1273,20.1],[1282,19.8],[1303,19.8],[1310,19.5],[1318,19.7],[1355,19.6],[1365,19.3],[1385,19.2],[1392,19.5],[1400,19.2],[1410,19.5],[1422,19.5]];

const L = 41.5;
const T = 25.5;
const W = 1172;
const H = 365.5;
const hourX = (h: number) => L + (h * W) / 24;

function line(am: Pt[], pm: Pt[], min: number, max: number) {
  const y = (v: number) => (T + ((max - v) / (max - min)) * H).toFixed(1);
  const a = am.map(([x, v]) => `${hourX((x - 120) / 119.6).toFixed(1)},${y(v)}`);
  const b = pm.map(([x, v]) => `${hourX(12 + (x - 36.5) / 116).toFixed(1)},${y(v)}`);
  return [...a, ...b].join(" ");
}

const HOURS = Array.from({ length: 25 }, (_, i) => i);
const LEFT = [520, 510, 500, 490, 480, 470, 460, 450];
const RIGHT = [100, 80, 60, 40, 20, 0, -10];

function Chart() {
  const ry = (v: number) => T + ((100 - v) / 110) * H;
  return (
    <svg viewBox="0 0 1238 439" className="h-[439px] w-[1238px] font-['Liberation_Sans','Noto_Sans_CJK_KR',sans-serif] text-[9.600px]">
      {LEFT.map((v, i) => (
        <g key={v}>
          <path d={`M${L - 8} ${Math.floor(T + (i * H) / 7) + 0.5}H${L + W}`} stroke="#e6e6e6" />
          <text x={L - 8} y={T + (i * H) / 7 + 3} textAnchor="end" fill="#666">{v}</text>
        </g>
      ))}
      {RIGHT.map((v) => (
        <g key={v}>
          <path d={`M${L} ${Math.floor(ry(v)) + 0.5}H${L + W + 8}`} stroke="#e6e6e6" />
          <text x={L + W + 8} y={ry(v) + 3} fill="#666">{v}</text>
        </g>
      ))}
      {HOURS.map((h) => (
        <g key={h}>
          <path d={`M${Math.floor(hourX(h)) + 0.5} ${T}V${T + H + 8}`} stroke={h === 0 || h === 24 ? "#d2d2d2" : "#e9e9e9"} />
          <text transform={`translate(${hourX(h) + 1} ${T + H + 12}) rotate(-32)`} textAnchor="end" fill="#666">
            {h === 24 ? "10-30 0:17" : `10-29 ${h}:17`}
          </text>
        </g>
      ))}
      <path d={`M${L} ${T + H - 0.5}H${L + W}`} stroke="#bdbdbd" />
      <path d={`M${L} ${ry(0)}H${L + W - 2}`} stroke="#000" strokeWidth="2.400" />
      <polyline points={line(HUM_AM, HUM_PM, -10, 100)} fill="none" stroke="#3ba2ea" strokeWidth="2.300" strokeLinejoin="round" />
      <polyline points={line(TMP_AM, TMP_PM, -10, 100)} fill="none" stroke="#ff6384" strokeWidth="2.300" strokeLinejoin="round" />
      <polyline points={line(CO2_AM, CO2_PM, 450, 520)} fill="none" stroke="#ff9c45" strokeWidth="2.300" strokeLinejoin="round" />
    </svg>
  );
}

function ChartPanel() {
  const field = "flex h-[27px] w-[68px] items-center justify-center rounded-[3px] border border-[#4a4a4c] bg-linear-to-b from-[#3b3b3e] to-[#242426]";
  const dash = <span className="font-['Liberation_Sans',sans-serif] text-[20px] font-bold leading-none text-[#e0e0e0]">-</span>;
  return (
    <div className="h-[493px] w-[1272px] border-l border-r border-t-2 border-x-black border-t-[#7180a0] bg-[#818084]">
      <div className="flex h-[47px] items-start pt-[3px] text-[#3a3a3c]">
        <span className="ml-[37px] text-[22px] leading-[26px]">기간</span>
        <Select className="ml-[5px] mt-px h-[32px] w-[120px] pb-[2px] text-[14.500px] leading-[24px]">1일이내</Select>
        <div className="ml-auto mr-[20px] flex h-[30px] items-center text-[14px]">
          <Co2 className="mt-[2px] h-[24px] w-[48px]" />
          <span className={field + " ml-[4px]"}>{dash}</span>
          <span className="ml-[5px] w-[26px]">ppm</span>
          <Thermo className="ml-[20px] mt-[3px] h-[24px] w-[14px]" />
          <span className={field + " ml-[9px]"}>{dash}</span>
          <span className="ml-[5px] w-[18px]">°C</span>
          <Drops className="ml-[11px] mt-[3px] h-[24px] w-[18px]" />
          <span className={field + " ml-[6px]"}>{dash}</span>
          <span className="ml-[5px] w-[12px]">%</span>
          <Bulb className="ml-[15px] mt-[3px] h-[24px] w-[15px]" />
          <span className={field + " ml-[8px]"}>{dash}</span>
        </div>
      </div>
      <div className="ml-[16px] h-[442px] w-[1240px] border border-t-2 border-black border-t-[#6f80a5] bg-white">
        <div className="relative">
          <div className="absolute left-[489px] top-[7px] flex items-center gap-[4px] font-['Liberation_Sans','Noto_Sans_CJK_KR',sans-serif] text-[9.600px] leading-[12px] text-[#666]">
            <span className="h-[12px] w-[35px] bg-[#ff9c45]" />
            <span className="w-[22px]">CO2</span>
            <span className="h-[12px] w-[35px] bg-[#ff6384]" />
            <span className="w-[21px]">온도</span>
            <span className="h-[12px] w-[35px] bg-[#3ba2ea]" />
            <span className="w-[21px]">습도</span>
            <span className="h-[12px] w-[35px] bg-black" />
            <span>조명</span>
          </div>
          <Chart />
        </div>
      </div>
    </div>
  );
}

/* ---------- page ---------- */

function FarmLogo() {
  return (
    <svg viewBox="0 0 82 42" className="h-[42px] w-[82px]">
      <path d="M49 15C50 4 60 0 75 0 73 8 68 15 55 15l-4 1Z" fill="#76a845" />
      <path d="M53 13c5-6 9-9 15-11" stroke="#c9e2a5" strokeWidth="1" fill="none" />
      <text x="0" y="28" textLength="80" lengthAdjust="spacingAndGlyphs" className="font-['Liberation_Serif',serif] text-[20px] font-bold" fill="#fff">Uni-Farm</text>
      <path d="M4 41c12-10 25-11 37-6 13 5 25 4 37-3C69 43 54 43 40 40c-13-4-25-4-36 1Z" fill="#76a845" />
    </svg>
  );
}

function Page() {
  return (
    <div className="flex h-[959px] w-full font-['Noto_Sans_CJK_KR','Noto_Sans',sans-serif]">
      <div className="flex h-full w-[1903px] flex-col bg-[#28292b] bg-[radial-gradient(ellipse_500px_330px_at_760px_420px,#3d3d3e,#28292b)]">
        <div className="flex h-[57px] w-full shrink-0 items-center border-b-[3px] border-[#5c6880]">
          <div className="flex w-[1503px] items-center pl-[34px] pt-[2px]">
            <FarmLogo />
            <span className="ml-[16px] text-[25px] font-medium leading-[40px] tracking-[2.200px] text-[#ececec] whitespace-nowrap">작물 관리 시스템</span>
            <span className="ml-auto text-[18px] tracking-[2.500px] text-[#168fd2]">[4석현농장] 소하테크 님</span>
          </div>
        </div>
        <div className="flex min-h-0 flex-1">
          <Sidebar />
          <div className="w-[1272px] shrink-0">
            <div className="flex h-[45px] items-center border-b-2 border-[#6f80a0]">
              <ListIcon className="ml-[6px] h-[27px] w-[22px] text-[#9b9b9b]" />
              <span className="ml-[8px] w-[538px] pb-[4px] text-[21px] font-medium leading-[30px] tracking-[1.550px] text-[#e6e6e6] whitespace-nowrap">재배동 리스트 - 실시간 데이터</span>
              <div className="flex h-[31px] w-[120px] items-center rounded-[4px] border-2 border-black bg-linear-to-b from-[#5a70b8] via-[#2f4b9a] via-35% to-[#2f4a98]">
                <svg viewBox="0 0 20 20" className="ml-[12px] h-[20px] w-[20px]">
                  <path d="M16.500 14.500A8 8 0 1 1 15.500 4.500" fill="none" stroke="#8fdcf5" strokeWidth="2.400" />
                  <path d="M19.500 1v8h-7Z" fill="#8fdcf5" />
                </svg>
                <span className="ml-[13px] pb-px text-[15px] font-bold tracking-[-0.100px] text-white">새로 고침</span>
              </div>
              <div className="ml-[6px] flex h-[31px] w-[120px] items-center rounded-[4px] border-2 border-black bg-linear-to-b from-[#3f8f42] via-[#1f7524] via-30% to-[#226b1e]">
                <svg viewBox="0 0 20 20" className="ml-[14px] h-[20px] w-[20px]">
                  <path d="M4 8H1.500V1.500h17V8H16M10 20V8" fill="none" stroke="#23e45c" strokeWidth="2.600" />
                  <path d="M10 4.500 15 11H5Z" fill="#23e45c" />
                </svg>
                <span className="ml-[13px] pb-px text-[15px] font-bold tracking-[-0.100px] text-white">설정저장</span>
              </div>
              <Select className="ml-[109px] h-[32px] w-[162px] pb-[2px] text-[14.500px]">4석현농장</Select>
              <Select className="ml-[15px] h-[32px] w-[160px] pb-[2px] text-[14.500px]">02</Select>
            </div>
            <div className="flex h-[364px]">
              <StatusPanel />
              <OutputPanel />
            </div>
            <ChartPanel />
          </div>
        </div>
      </div>
      <div className="flex h-full w-[17px] flex-col items-center bg-[#f0f0f0]">
        <div className="flex h-[17px] items-center"><svg viewBox="0 0 8 5" className="h-[5px] w-[8px]"><path d="M4 0l4 5H0Z" fill="#8a8a8a" /></svg></div>
        <div className="h-[890px] w-[13px] bg-[#c1c1c1]" />
        <div className="mt-auto flex h-[17px] items-center"><svg viewBox="0 0 8 5" className="h-[5px] w-[8px]"><path d="M4 5l4-5H0Z" fill="#505050" /></svg></div>
      </div>
    </div>
  );
}

/* ---------- taskbar ---------- */

function JetBrains({ text, border }: { text: string; border: string }) {
  return (
    <span className={"flex h-[17px] w-[16px] flex-col border bg-black pl-px font-['Liberation_Mono',monospace] text-[9px] font-bold leading-[10px] text-white " + border}>
      {text}
      <span className="ml-px h-px w-[6px] bg-white" />
    </span>
  );
}

const TASKS: { icon: ReactNode; open?: boolean; focus?: boolean }[] = [
  { icon: <svg viewBox="0 0 16 16" className="h-4 w-4"><path d="M0 2l6.500-1v6.500H0zM7.500 1 16 0v7.500H7.500zM0 8.500h6.500V15L0 14zM7.500 8.500H16V16l-8.500-1z" fill="#fff" /></svg> },
  { icon: <svg viewBox="0 0 20 14" className="h-[14px] w-[20px]"><path d="M5 .7h10v12.600H5ZM3 2.500H.7v9H3M17 2.500h2.300v9H17" fill="none" stroke="#fff" strokeWidth="1.200" /></svg> },
  { open: true, icon: <svg viewBox="0 0 18 16" className="h-[15px] w-[17px]"><path d="M0 1h7l2 2h9v12H0Z" fill="#fbd36b" /><path d="M3 16V8h12v8h-3.500v-4h-5v4Z" fill="#35a3e0" /></svg> },
  { focus: true, open: true, icon: <ChromeLogo className="h-[15px] w-[15px]" /> },
  {
    icon: (
      <svg viewBox="0 0 16 16" className="h-4 w-4">
        <path d="M0 7C1 2 4 0 8.500 0 13 0 16 3 16 7.500V9.500H5.500c.2 4 5.500 4.500 9 2.300v3C10 17 3 16 2.500 10 2.300 7.500 4 5 6.500 4 5.500 5.500 5.500 6 5.500 6.800H11C11 3.500 9.500 2.800 7.500 3 4.500 3.200 2 4.500 0 7Z" fill="#0f7bdc" />
      </svg>
    ),
  },
  { icon: <FaInternetExplorer className="h-[17px] w-[17px] text-[#4bb4ee]" /> },
  { icon: <span className="flex h-4 w-4 items-center justify-center bg-[#ffe100]"><svg viewBox="0 0 12 12" className="h-3 w-3"><path d="M6 1c3 0 5.500 1.800 5.500 4.300S9 9.500 6 9.500L4 11.500 4 9.200C2 8.700.5 7.200.5 5.300.5 2.800 3 1 6 1Z" fill="#3b1e1e" /></svg></span> },
  { icon: <span className="flex h-4 w-4 items-center justify-center rounded-full bg-[#6cb33e] text-[12px] font-bold leading-none text-white">µ</span> },
  { icon: <svg viewBox="0 0 16 16" className="h-[15px] w-[15px]"><path fillRule="evenodd" d="M11 0l5 2v12l-5 2-6.500-6L1.500 12.500 0 11.800V4.200l1.500-.7 3 2.500ZM12 4.500 8 8l4 3.500ZM1.500 6v4l2-2Z" fill="#a56bc8" /></svg> },
  { icon: <svg viewBox="0 0 16 16" className="h-[15px] w-[15px]"><path fillRule="evenodd" d="M11.500 0 16 2v12l-4.500 2-7-6.300L1.500 12 0 11.300 3.200 8 0 4.700 1.500 4l3 2.300ZM12 4.500 7.500 8l4.500 3.500Z" fill="#2489ca" /></svg> },
  { icon: <svg viewBox="0 0 14 14" className="h-[13px] w-[13px]"><circle cx="7" cy="7" r="7" fill="#3a2f74" /><path d="M1 5h12M1 7h12M1 9h12" stroke="#e6e3f5" strokeWidth="1" /><path d="M3 0a8 8 0 0 0 0 14" fill="none" stroke="#f4942a" strokeWidth="1.500" /></svg> },
  { icon: <svg viewBox="0 0 18 10" className="h-[10px] w-[17px]"><path d="M0 10a9 8 0 0 1 18 0Z" fill="#8bc34a" /><path d="M3 0l2 3M15 0l-2 3" stroke="#8bc34a" /><circle cx="5.500" cy="6.500" r="1" fill="#111" /><circle cx="12.500" cy="6.500" r="1" fill="#111" /></svg> },
  { icon: <JetBrains text="IJ" border="border-[#2f7dfa]" /> },
  { open: true, icon: <JetBrains text="PS" border="border-[#b45cf0]" /> },
  { icon: <JetBrains text="DG" border="border-[#21d789]" /> },
  { icon: <span className="flex h-[15px] w-[15px] items-center justify-center rounded-full bg-[#333] text-[5px] font-bold text-[#ccc]">APO</span> },
  { icon: <svg viewBox="0 0 16 16" className="h-4 w-4"><path d="M7 0h7v6H7zM1 9h7v6H1z" fill="#b8bcc4" /><path d="M8.500 1.500h4v3h-4zM2.500 10.500h4v3h-4z" fill="#1b3fae" /><path d="M12 3 7 8h3l-6 6 2-5H3Z" fill="#ffe62e" /></svg> },
  { icon: <svg viewBox="0 0 18 18" className="h-[17px] w-[17px]"><path d="M1 1h7L6.500 2.500 10 6 6.500 9.500 3 6 1 8Z" fill="#3a77d8" /><path d="M17 17h-7l1.500-1.500L9 13l3-3 2.500 2.500L17 10Z" fill="#33a544" /><path d="M1 11h7v6H1z" fill="#b8bcc4" /><path d="M2.500 11V9.500a2 2 0 0 1 4 0V11" fill="none" stroke="#b8bcc4" /></svg> },
  { open: true, icon: <svg viewBox="0 0 12 14" className="h-[15px] w-[13px]"><path d="M0 0h12v9l-4 5H0Z" fill="#f7e48b" /><path d="M12 9H8v5Z" fill="#c9b24c" /></svg> },
];

function Taskbar() {
  return (
    <div className="flex h-[30px] w-full items-center bg-[#050505] font-['Noto_Sans','Noto_Sans_CJK_KR',sans-serif] text-[12px] text-white">
      {TASKS.map((t, i) => (
        <div key={i} className={"relative flex h-[30px] w-[37px] shrink-0 items-center justify-center " + (t.focus ? "bg-[#3a3a3a]" : "")}>
          {t.icon}
          {t.open && <span className={"absolute bottom-0 h-[2px] bg-[#9fd25c] " + (t.focus ? "inset-x-0" : "inset-x-[4px]")} />}
        </div>
      ))}
      <span className="ml-[559px] w-[30px]">주소</span>
      <div className="mt-[2px] flex h-[20px] w-[230px] items-center justify-end bg-white">
        <svg viewBox="0 0 9 6" className="mr-[5px] h-[6px] w-[9px]"><path d="M.5.5l4 4 4-4" fill="none" stroke="#555" /></svg>
        <span className="flex h-full w-[20px] items-center justify-center border-l border-[#ccc]">
          <svg viewBox="0 0 12 12" className="h-[11px] w-[11px]"><path d="M2 4a4.500 4.500 0 1 0 5-2M8.500 0 6 2l2 2.500" fill="none" stroke="#666" strokeWidth="1.400" /></svg>
        </span>
      </div>
      <div className="ml-[2px] flex items-center">
        <span className="flex w-6 justify-center"><svg viewBox="0 0 16 16" className="h-[15px] w-[15px]"><rect width="16" height="16" rx="4" fill="#13c4bb" /><path d="m8 3 1.500 3.300 3.500.4-2.600 2.400.7 3.500L8 10.800l-3.100 1.800.7-3.500L3 6.700l3.500-.4Z" fill="#fff" /></svg></span>
        <span className="flex w-6 justify-center"><ChromeLogo className="h-[14px] w-[14px]" /></span>
        <span className="flex w-6 justify-center"><svg viewBox="0 0 16 16" className="h-4 w-4"><path d="M1 1.500h12v6c0 3-3 5-6 6.500-3-1.500-6-3.500-6-6.500Z" fill="#fff" /><path d="M7 1v13M1 7h12" stroke="#111" /><path d="M11 7l5 9H6Z" fill="#fbc02d" /><path d="M11 10v3M11 14v1" stroke="#222" /></svg></span>
        <span className="flex w-6 justify-center"><svg viewBox="0 0 16 16" className="h-4 w-4"><path d="M0 0h16v16H0z" fill="#f2f2f2" /><path d="M2 11h3v4H2zM6 8h3v7H6zM10 2h3v13h-3z" fill="#8a8a8a" /><path d="M9 9h6v6H9z" fill="#333" /></svg></span>
        <span className="flex w-6 justify-center"><svg viewBox="0 0 12 15" className="h-[15px] w-[12px]"><path d="M0 1h12v9c0 3-3 4-6 5-3-1-6-2-6-5Z" fill="#e0444f" /><path d="M8 4a3.500 3.500 0 1 0 0 6" fill="none" stroke="#7ab648" strokeWidth="1.500" /></svg></span>
        <span className="flex w-6 justify-center"><svg viewBox="0 0 16 16" className="h-4 w-4"><path d="M4 1c3 2 6 1 10-1l1 7c1 3 0 6-2 6L9 10l-5 3-2-3 3-4Z" fill="#ff7d16" /><circle cx="4.500" cy="11.500" r="4.500" fill="#e5363b" /><path d="M3 10l3 3M6 10l-3 3" stroke="#fff" strokeWidth="1.300" /></svg></span>
        <span className="flex w-6 justify-center"><svg viewBox="0 0 14 14" className="h-[14px] w-[14px]"><path d="M0 5h3l5-5v14L3 9H0Z" fill="#f08a63" /><path d="M10 2v10M13 3v8" stroke="#7c3a22" /></svg></span>
        <span className="flex w-6 justify-center"><svg viewBox="0 0 17 15" className="h-[14px] w-[16px]"><path d="M4 3.500h12v7H4M10 11v3M7 14h7M.5.5h4v4h-4ZM2.500 5v9" fill="none" stroke="#fff" /></svg></span>
        <span className="flex w-6 justify-center"><svg viewBox="0 0 16 12" className="h-[12px] w-[16px]"><path d="M.5 4h2L6 1v10L2.500 8h-2Z" fill="none" stroke="#fff" /><path d="M8 4q1.500 2 0 4M10.500 2.500q3 3.500 0 7M13 1q4.500 5 0 10" fill="none" stroke="#fff" /></svg></span>
        <span className="ml-[4px] flex w-6 justify-center">
          <svg viewBox="0 0 16 16" className="h-4 w-4">
            <path d="M15.500 5.500C13 9 8 9 5 11c-3 2-1 5 1.500 2.500C9 11 9 6 11.500 1.500l2 1L9 11M1 11c-1 3 1 4 3 4M13 7l2 2" fill="none" stroke="#fff" strokeWidth="1.200" />
          </svg>
        </span>
        <span className="ml-[3px] flex w-6 justify-center"><svg viewBox="0 0 14 14" className="h-[13px] w-[13px]"><circle cx="7" cy="7" r="7" fill="#8c8c8c" /><path d="M4.500 4.500l5 5M9.500 4.500l-5 5" stroke="#111" strokeWidth="1.500" /></svg></span>
      </div>
      <span className="ml-[6px] w-[77px] tracking-[-0.100px] whitespace-nowrap">오전 12:16</span>
      <svg viewBox="0 0 16 16" className="h-4 w-4"><path d="M.7 1.500h14.600V12H11l-3 3-3-3H.7Z" fill="none" stroke="#fff" strokeWidth="1.200" /></svg>
      <span className="ml-auto mr-[4px] h-full w-px bg-[#555]" />
    </div>
  );
}

export default function App() {
  return (
    <div className="flex h-[1080px] w-[1920px] flex-col overflow-hidden bg-[#28292b]">
      <Browser />
      <Page />
      <Taskbar />
    </div>
  );
}
